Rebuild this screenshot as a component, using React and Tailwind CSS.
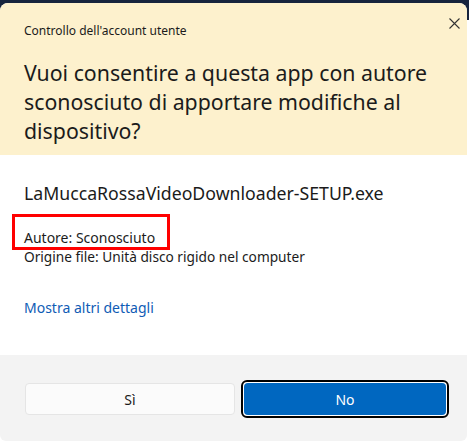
import React from "react";

export default function App() {
  return (
    <div
      className="w-[469px] h-[441px] overflow-hidden bg-[linear-gradient(#17243d_0,#17243d_20px,#ffffff_20px)]"
      style={{ fontFamily: '"Noto Sans", "Open Sans", sans-serif' }}
    >
      <div className="mt-[3px] h-[438px] w-[467px] rounded-t-[8px] rounded-b-[6px] overflow-hidden flex flex-col bg-white">
        <div className="relative h-[152px] shrink-0 bg-[#fdf1cd] px-[24px] pt-[20px]">
          <div className="text-[12px] leading-[16px] text-[#1b1b1b]">Controllo dell'account utente</div>
          <div className="mt-[19px] text-[21.3px] leading-[29px] text-[#1b1b1b]">
            Vuoi consentire a questa app con autore sconosciuto di apportare modifiche al dispositivo?
          </div>
          <svg className="absolute right-[7px] top-[15px]" width="11" height="11" viewBox="0 0 11 11">
            <path d="M0.5 0.5L10.5 10.5M10.5 0.5L0.5 10.5" stroke="#333" strokeWidth="1.1" />
          </svg>
        </div>
        <div className="h-[200px] shrink-0 bg-white px-[24px] pt-[26px]">
          <div className="text-[17.7px] leading-[24px] text-[#1b1b1b]">LaMuccaRossaVideoDownloader-SETUP.exe</div>
          <div className="relative mt-[23px] text-[14px] leading-[19px] text-[#1b1b1b]">
            <div className="absolute left-[-12px] top-[-14px] h-[36px] w-[158px] border-[3px] border-[#ff0000]" />
            <div>Autore: Sconosciuto</div>
            <div className="text-[13.7px]">Origine file: Unità disco rigido nel computer</div>
          </div>
          <div className="mt-[32px] text-[14px] leading-[19px] text-[#0f5cb5]">Mostra altri dettagli</div>
        </div>
        <div className="flex-1 bg-[#f3f3f3] flex gap-[6px] pl-[25px] pr-[18px] pt-[28px]">
          <button className="h-[32px] w-[210px] shrink-0 rounded-[4px] border border-[#e5e5e5] bg-[#fbfbfb] text-[14px] text-[#1b1b1b]">
            Sì
          </button>
          <div className="mt-[-3px] h-[38px] w-[208px] shrink-0 rounded-[6px] border-2 border-black p-[1px] bg-white">
            <button className="h-full w-full rounded-[4px] bg-[#0067c0] text-[14px] text-white">No</button>
          </div>
        </div>
      </div>
    </div>
  );
}
